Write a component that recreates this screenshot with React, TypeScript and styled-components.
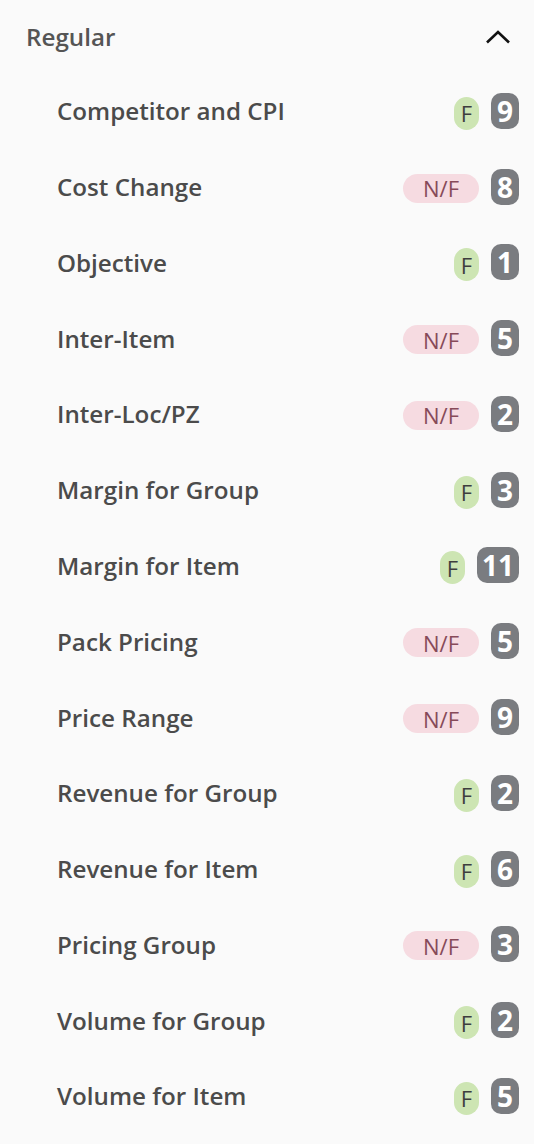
import React from "react";
import styled, { createGlobalStyle } from "styled-components";

type Status = "F" | "N/F";

interface Item {
	label: string;
	status: Status;
	count: number;
}

const items: Item[] = [
	{ label: "Competitor and CPI", status: "F", count: 9 },
	{ label: "Cost Change", status: "N/F", count: 8 },
	{ label: "Objective", status: "F", count: 1 },
	{ label: "Inter-Item", status: "N/F", count: 5 },
	{ label: "Inter-Loc/PZ", status: "N/F", count: 2 },
	{ label: "Margin for Group", status: "F", count: 3 },
	{ label: "Margin for Item", status: "F", count: 11 },
	{ label: "Pack Pricing", status: "N/F", count: 5 },
	{ label: "Price Range", status: "N/F", count: 9 },
	{ label: "Revenue for Group", status: "F", count: 2 },
	{ label: "Revenue for Item", status: "F", count: 6 },
	{ label: "Pricing Group", status: "N/F", count: 3 },
	{ label: "Volume for Group", status: "F", count: 2 },
	{ label: "Volume for Item", status: "F", count: 5 },
];

const ChevronUp = () => (
	<svg width="26" height="14" viewBox="0 0 26 14" fill="none">
		<path d="M2 12.5 L13 2 L24 12.5" stroke="#111" strokeWidth="2.6" />
	</svg>
);

const App = (): JSX.Element => {
	return (
		<>
			<GlobalStyle />
			<Panel>
				<Header>
					<Title>Regular</Title>
					<ChevronUp />
				</Header>
				<List>
					{items.map((item) => (
						<Row key={item.label}>
							<Label>{item.label}</Label>
							<Badges>
								<StatusPill status={item.status}>{item.status}</StatusPill>
								<Count>{item.count}</Count>
							</Badges>
						</Row>
					))}
				</List>
			</Panel>
		</>
	);
};

const GlobalStyle = createGlobalStyle`
	html, body {
		margin: 0;
		padding: 0;
		background: #fafafa;
	}
	body {
		font-family: "Open Sans", "Noto Sans", sans-serif;
	}
`;

const Panel = styled.div`
	width: 534px;
	min-height: 1144px;
	box-sizing: border-box;
	background: #fafafa;
	padding: 0 15px 0 26px;
`;

const Header = styled.div`
	height: 73px;
	display: flex;
	align-items: center;
	justify-content: space-between;
	padding: 0 8px 0 0;
	box-sizing: border-box;
	svg {
		margin-top: 1px;
	}
`;

const Title = styled.div`
	font-size: 24.2px;
	font-weight: 600;
	color: #555555;
`;

const List = styled.div`
	display: flex;
	flex-direction: column;
	padding-left: 31px;
`;

const Row = styled.div`
	height: 75.77px;
	display: flex;
	align-items: center;
	justify-content: space-between;
`;

const Label = styled.div`
	font-size: 24.2px;
	font-weight: 600;
	color: #4b4b4b;
`;

const Badges = styled.div`
	display: flex;
	align-items: center;
	gap: 12px;
`;

const StatusPill = styled.span<{ status: Status }>`
	display: inline-flex;
	align-items: center;
	justify-content: center;
	box-sizing: border-box;
	font-size: 22px;
	line-height: 1;
	font-weight: 400;
	height: ${(p) => (p.status === "F" ? "33px" : "29px")};
	min-width: ${(p) => (p.status === "F" ? "25px" : "76px")};
	padding: 0 ${(p) => (p.status === "F" ? "4px" : "12px")};
	margin-top: ${(p) => (p.status === "F" ? "5px" : "3px")};
	border-radius: 17px;
	background: ${(p) => (p.status === "F" ? "#cde5b3" : "#f6dbe1")};
	color: ${(p) => (p.status === "F" ? "#3e3e3e" : "#874a59")};
`;

const Count = styled.span`
	display: inline-flex;
	align-items: center;
	justify-content: center;
	box-sizing: border-box;
	height: 36px;
	min-width: 28px;
	padding: 0 5px;
	border-radius: 10px;
	background: #7a7c80;
	color: #ffffff;
	font-size: 28px;
	line-height: 1;
	font-weight: 700;
`;

export default App;
